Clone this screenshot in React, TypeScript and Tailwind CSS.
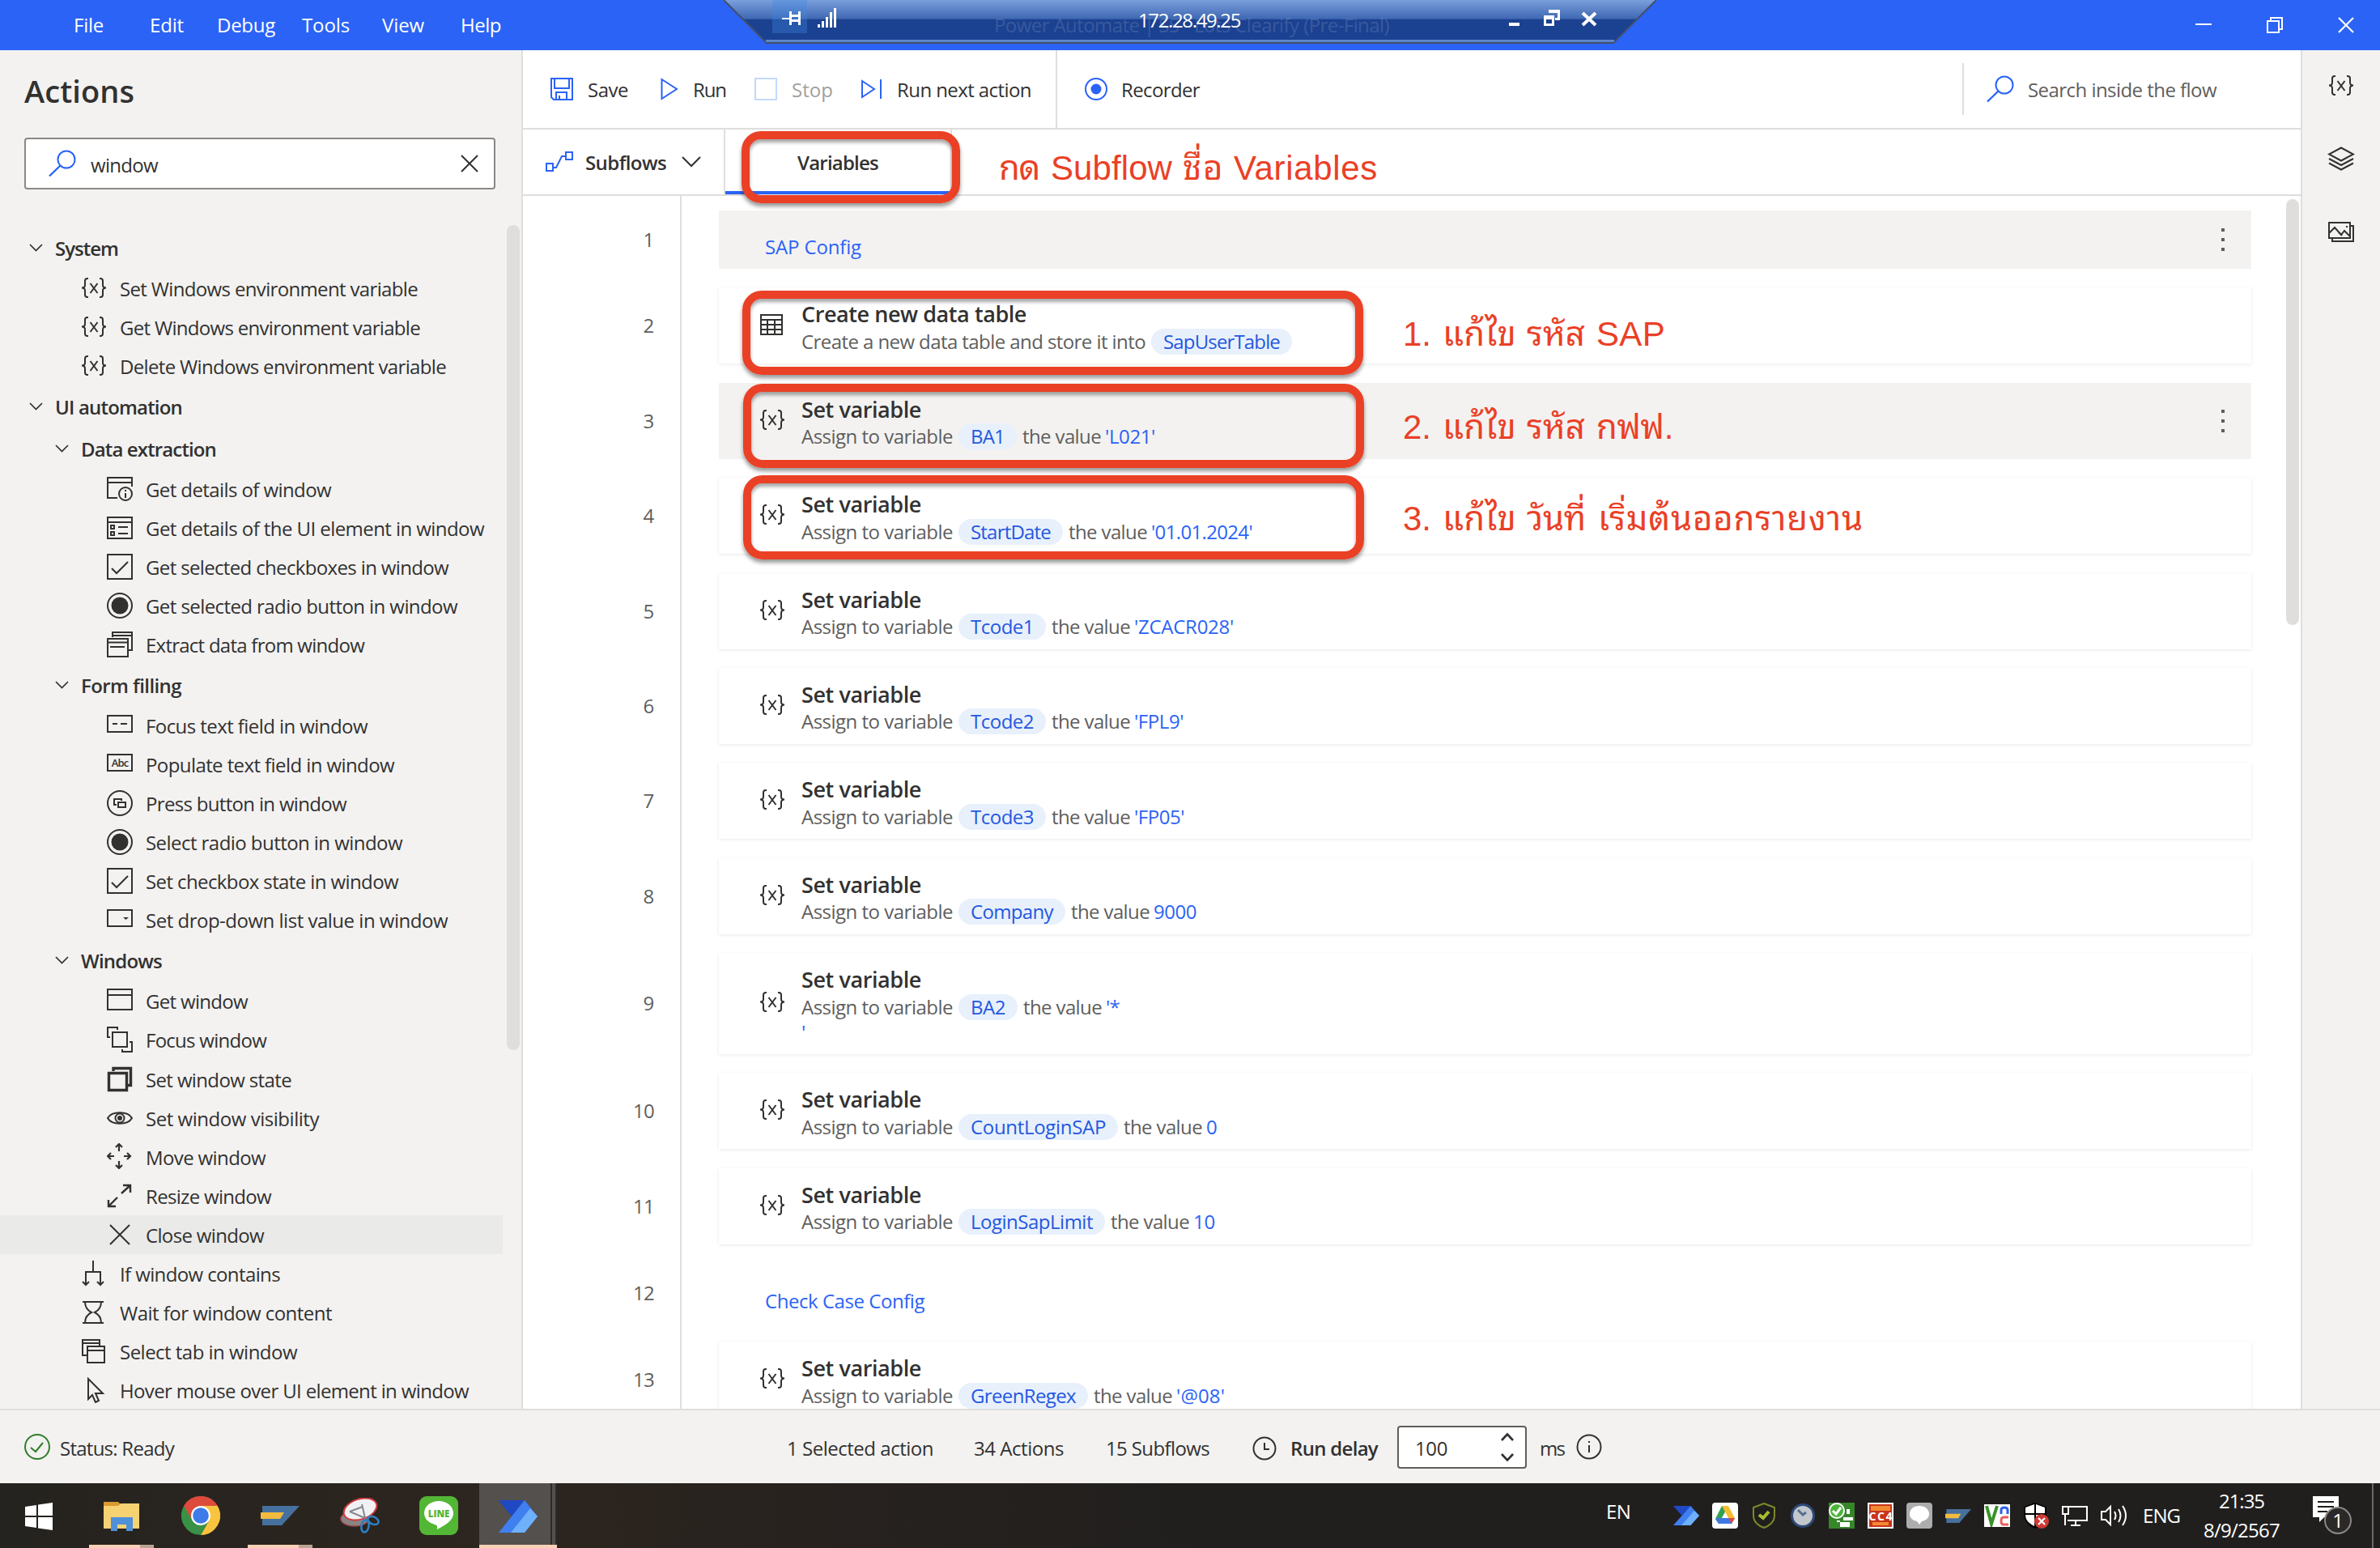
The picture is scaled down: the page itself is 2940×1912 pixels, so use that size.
import React, { useLayoutEffect, useRef, useState } from "react";

/* Text run whose letter spacing is adjusted so that it fills a given width. */
function T({ w, children, className = "" }: { w?: number; children: string; className?: string }) {
  const ref = useRef<HTMLSpanElement>(null);
  const [ls, setLs] = useState<number | null>(null);
  useLayoutEffect(() => {
    if (w && ref.current && ls === null) {
      const natural = ref.current.getBoundingClientRect().width;
      /* Thai vowel and tone marks take no spacing of their own. */
      const clusters = children.replace(/[\u0e31\u0e34-\u0e3a\u0e47-\u0e4e]/g, "").length;
      setLs((w - natural) / clusters);
    }
  }, [w, ls, children]);
  return (
    <span
      ref={ref}
      className={"inline-block whitespace-pre " + className}
      style={ls !== null ? { letterSpacing: `${ls}px` } : undefined}
    >
      {children}
    </span>
  );
}

function Svg({
  w,
  h,
  vb,
  className = "",
  sw = 2,
  children,
}: {
  w: number;
  h: number;
  vb?: string;
  className?: string;
  sw?: number;
  children: React.ReactNode;
}) {
  return (
    <svg
      width={w}
      height={h}
      viewBox={vb ?? `0 0 ${w} ${h}`}
      fill="none"
      stroke="currentColor"
      strokeWidth={sw}
      className={"block shrink-0 " + className}
    >
      {children}
    </svg>
  );
}

const VarIcon = () => (
  <Svg w={32} h={26}>
    <path d="M9 1H8Q5 1 5 4V9Q5 12.5 1 12.5Q5 12.5 5 16V21Q5 24 8 24H9M23 1H24Q27 1 27 4V9Q27 12.5 31 12.5Q27 12.5 27 16V21Q27 24 24 24H23" />
    <path d="M11.5 7L20.5 19M20.5 7L11.5 19" />
  </Svg>
);

const Search = () => (
  <Svg w={34} h={34}>
    <circle cx="22" cy="12" r="10.5" />
    <path d="M14.5 19.5L1 32.5" strokeWidth="2.4" />
  </Svg>
);

const Chevron = ({ big = false }: { big?: boolean }) =>
  big ? (
    <Svg w={24} h={14}>
      <path d="M1 1L12 12L23 1" />
    </Svg>
  ) : (
    <Svg w={17} h={10} sw={1.7}>
      <path d="M1 1L8.5 8.5L16 1" />
    </Svg>
  );

const treeIcons: Record<string, React.ReactNode> = {
  var: <VarIcon />,
  info: (
    <Svg w={32} h={32}>
      <path d="M13 27H1V2H31V13M1 8H31" />
      <circle cx="23" cy="22" r="8" />
      <path d="M23 21V27M23 17V19" />
    </Svg>
  ),
  list: (
    <Svg w={32} h={32}>
      <path d="M1 3H31V29H1ZM1 9H31M14 15H26M14 23H26M5 13H9V17H5ZM5 21H9V25H5Z" />
    </Svg>
  ),
  check: (
    <Svg w={32} h={32}>
      <path d="M1 1H31V31H1Z" />
      <path d="M6 18L12 24L26 10" />
    </Svg>
  ),
  radio: (
    <Svg w={32} h={32}>
      <circle cx="16" cy="16" r="15" />
      <circle cx="16" cy="16" r="10.5" fill="currentColor" stroke="none" />
    </Svg>
  ),
  extract: (
    <Svg w={32} h={32}>
      <path d="M1 9H26V31H1ZM1 13.5H26M4 19H22M7 7V1H31V23H27M7 5H31" />
    </Svg>
  ),
  field: (
    <Svg w={32} h={24} className="-mt-[4px]">
      <path d="M1 2H31V22H1ZM7 12H13M17 12H25" />
    </Svg>
  ),
  abc: (
    <span className="-mt-[4px] flex h-[22px] w-[32px] items-center justify-center border-2 border-[#323130] text-[13px] font-semibold leading-none tracking-[-0.8px]">
      Abc
    </span>
  ),
  press: (
    <Svg w={32} h={32}>
      <circle cx="16" cy="16" r="15" />
      <path d="M12 18H9V11H18V13M14 15H23V21H14Z" />
    </Svg>
  ),
  drop: (
    <Svg w={32} h={24} className="-mt-[4px]">
      <path d="M1 2H31V22H1Z" />
      <path d="M20 11H27L23.5 14Z" fill="currentColor" stroke="none" />
    </Svg>
  ),
  window: (
    <Svg w={32} h={28} className="-mt-[2px]">
      <path d="M1 1H31V26H1ZM1 8H31" />
    </Svg>
  ),
  focus: (
    <Svg w={32} h={32}>
      <path d="M7 7H25V25H7ZM4 13H1V1H13V4M28 19H31V31H19V28" />
    </Svg>
  ),
  state: (
    <Svg w={32} h={32}>
      <path d="M2.5 8.5H24.5V29.5H2.5Z" strokeWidth="3.4" />
      <path d="M8 6V2.5H29.5V23.5H26" strokeWidth="3.4" />
    </Svg>
  ),
  eye: (
    <Svg w={32} h={20}>
      <path d="M1 10C6 1 26 1 31 10C26 19 6 19 1 10Z" />
      <circle cx="16" cy="10" r="5.5" />
      <circle cx="16" cy="10" r="2" fill="currentColor" />
    </Svg>
  ),
  move: (
    <Svg w={32} h={32} sw={2.2} className="-mt-[2px]">
      <path d="M15 1V10M11 5L15 1L19 5M15 31V22M11 27L15 31L19 27M1 16H9M5 12L1 16L5 20M29 16H21M25 12L29 16L25 20" />
    </Svg>
  ),
  resize: (
    <Svg w={32} h={32} sw={2.4}>
      <path d="M20 3H29V12M29 3L18 13M2 21V29H11M3 28L13 18" />
    </Svg>
  ),
  close: (
    <Svg w={32} h={28}>
      <path d="M4 2L28 26M28 2L4 26" />
    </Svg>
  ),
  branch: (
    <Svg w={32} h={34}>
      <path d="M15 1V15M6 31V15H24V31M2 27L6 31L10 27M20 27L24 31L28 27" />
    </Svg>
  ),
  hourglass: (
    <Svg w={32} h={30}>
      <path d="M2 2H28M2 28H28M5 2C5 10 9 13 13 15C9 17 5 20 5 28M25 2C25 10 21 13 17 15C21 17 25 20 25 28" />
    </Svg>
  ),
  tabs: (
    <Svg w={32} h={30}>
      <path d="M8 20H2V1H23V8M2 5H23M8 9H29V29H8ZM8 14H29" />
    </Svg>
  ),
  cursor: (
    <Svg w={32} h={32}>
      <path d="M9 2V27L14 22L18 31L22 29L18 20H27Z" />
    </Svg>
  ),
};

type TreeRow = { kind: "head0" | "head1" | "item1" | "item2"; text: string; w: number; icon?: string; sel?: boolean };
const tree: TreeRow[] = [
  { kind: "head0", text: "System", w: 78 },
  { kind: "item1", text: "Set Windows environment variable", w: 368, icon: "var" },
  { kind: "item1", text: "Get Windows environment variable", w: 371, icon: "var" },
  { kind: "item1", text: "Delete Windows environment variable", w: 403, icon: "var" },
  { kind: "head0", text: "UI automation", w: 157 },
  { kind: "head1", text: "Data extraction", w: 167 },
  { kind: "item2", text: "Get details of window", w: 229, icon: "info" },
  { kind: "item2", text: "Get details of the UI element in window", w: 418, icon: "list" },
  { kind: "item2", text: "Get selected checkboxes in window", w: 374, icon: "check" },
  { kind: "item2", text: "Get selected radio button in window", w: 385, icon: "radio" },
  { kind: "item2", text: "Extract data from window", w: 270, icon: "extract" },
  { kind: "head1", text: "Form filling", w: 124 },
  { kind: "item2", text: "Focus text field in window", w: 274, icon: "field" },
  { kind: "item2", text: "Populate text field in window", w: 307, icon: "abc" },
  { kind: "item2", text: "Press button in window", w: 248, icon: "press" },
  { kind: "item2", text: "Select radio button in window", w: 317, icon: "radio" },
  { kind: "item2", text: "Set checkbox state in window", w: 312, icon: "check" },
  { kind: "item2", text: "Set drop-down list value in window", w: 373, icon: "drop" },
  { kind: "head1", text: "Windows", w: 100 },
  { kind: "item2", text: "Get window", w: 126, icon: "window" },
  { kind: "item2", text: "Focus window", w: 149, icon: "focus" },
  { kind: "item2", text: "Set window state", w: 180, icon: "state" },
  { kind: "item2", text: "Set window visibility", w: 214, icon: "eye" },
  { kind: "item2", text: "Move window", w: 148, icon: "move" },
  { kind: "item2", text: "Resize window", w: 155, icon: "resize" },
  { kind: "item2", text: "Close window", w: 146, icon: "close", sel: true },
  { kind: "item1", text: "If window contains", w: 198, icon: "branch" },
  { kind: "item1", text: "Wait for window content", w: 262, icon: "hourglass" },
  { kind: "item1", text: "Select tab in window", w: 219, icon: "tabs" },
  { kind: "item1", text: "Hover mouse over UI element in window", w: 431, icon: "cursor" },
];

function TreeLine({ r }: { r: TreeRow }) {
  if (r.kind === "head0" || r.kind === "head1") {
    return (
      <div className={"flex h-[52px] items-center gap-[15px] font-semibold " + (r.kind === "head0" ? "pl-[36px]" : "pl-[68px]")}>
        <Chevron />
        <T w={r.w} className="relative top-px">{r.text}</T>
      </div>
    );
  }
  return (
    <div
      className={
        "flex h-[48.04px] w-[621px] items-center gap-4 " +
        (r.kind === "item1" ? "pl-[100px] " : "pl-[132px] ") +
        (r.sel ? "bg-[#eaeae9]" : "")
      }
    >
      <span className="flex w-[32px] justify-center">{treeIcons[r.icon!]}</span>
      <T w={r.w} className="relative top-px">{r.text}</T>
    </div>
  );
}

function Sidebar() {
  return (
    <aside className="flex w-[646px] shrink-0 flex-col overflow-hidden border-r-2 border-[#dfdedd] bg-[#f3f2f1]">
      <h1 className="mt-[26px] pl-[30px] text-[38px] font-semibold leading-[48px]">
        <T w={136}>Actions</T>
      </h1>
      <div className="ml-[30px] mt-[34px] flex h-[64px] w-[582px] items-center rounded-[4px] border-2 border-[#8a8886] bg-white pl-[28px] pr-[19px]">
        <span className="text-[#2b63f6]"><Search /></span>
        <T w={83} className="relative top-[2px] ml-[18px]">window</T>
        <span className="ml-auto">
          <Svg w={22} h={22}><path d="M1 1L21 21M21 1L1 21" /></Svg>
        </span>
      </div>
      <div className="mt-[44px] flex min-h-0 flex-1 justify-between overflow-hidden">
        <div className="mt-[2px]">
          {tree.map((r, i) => (
            <TreeLine key={i} r={r} />
          ))}
        </div>
        <div className="mr-[2px] h-[1019px] w-[16px] shrink-0 rounded-full bg-[#dfdedd]" />
      </div>
    </aside>
  );
}

type Step = {
  h: number;
  n: number;
  comment?: string;
  cw?: number;
  hl?: boolean;
  title?: string;
  v?: string;
  vw?: number;
  val?: string;
  valw?: number;
  extra?: string;
};
const steps: Step[] = [
  { n: 1, h: 72, comment: "SAP Config", cw: 119, hl: true },
  { n: 2, h: 94, title: "Create new data table", v: "SapUserTable", vw: 144 },
  { n: 3, h: 94, hl: true, v: "BA1", vw: 42, val: "'L021'", valw: 62 },
  { n: 4, h: 94, v: "StartDate", vw: 99, val: "'01.01.2024'", valw: 125 },
  { n: 5, h: 94, v: "Tcode1", vw: 78, val: "'ZCACR028'", valw: 123 },
  { n: 6, h: 94, v: "Tcode2", vw: 78, val: "'FPL9'", valw: 61 },
  { n: 7, h: 94, v: "Tcode3", vw: 78, val: "'FP05'", valw: 62 },
  { n: 8, h: 94, v: "Company", vw: 102, val: "9000", valw: 53 },
  { n: 9, h: 124.6, v: "BA2", vw: 43, val: "'*", valw: 17, extra: "'" },
  { n: 10, h: 94, v: "CountLoginSAP", vw: 167, val: "0", valw: 13 },
  { n: 11, h: 94, v: "LoginSapLimit", vw: 151, val: "10", valw: 27 },
  { n: 12, h: 74, comment: "Check Case Config", cw: 197 },
  { n: 13, h: 94, v: "GreenRegex", vw: 130, val: "'@08'", valw: 60 },
];

function StepCard({ s }: { s: Step }) {
  return (
    <div
      style={{ height: s.h }}
      className={
        "flex w-[1893px] shrink-0 " +
        (s.hl ? "bg-[#f3f2f1]" : s.comment ? "bg-white" : "bg-white shadow-[0_1px_4px_rgba(0,0,0,0.09)]")
      }
    >
      {s.comment ? (
        <div className={"pl-[57px] leading-[36px] text-[#2b63f6] " + (s.n === 1 ? "pt-[27px]" : "pt-[29px]")}>
          <T w={s.cw}>{s.comment}</T>
        </div>
      ) : (
        <>
          <div className="flex w-[102px] items-center pb-[2px] pl-[50px]">
            {s.n === 2 ? (
              <Svg w={30} h={26}>
                <path d="M2 1H28V25H2ZM2 7H28M2 13H28M2 19H28M10 7V25M19 7V25" />
              </Svg>
            ) : (
              <VarIcon />
            )}
          </div>
          <div className="pt-[16px]">
            <div className="text-[27px] font-semibold leading-[33px]">
              <T w={s.title ? 278 : 148}>{s.title ?? "Set variable"}</T>
            </div>
            <div className="flex h-[35px] items-center gap-2 leading-[32px] text-[#605e5c]">
              <T w={s.title ? 425 : 187}>
                {s.title ? "Create a new data table and store it into" : "Assign to variable"}
              </T>
              <span className="-mx-px flex h-[32px] items-center rounded-full bg-[#e8f0fc] px-[15px] text-[#2458e0]">
                <T w={s.vw}>{s.v!}</T>
              </span>
              {s.val && (
                <>
                  <T w={97}>the value</T>
                  <T w={s.valw} className="-ml-[3px] text-[#2b63f6]">{s.val}</T>
                </>
              )}
            </div>
            {s.extra && <div className="leading-[28px] text-[#2b63f6]">{s.extra}</div>}
          </div>
        </>
      )}
      {s.hl && (
        <div className="ml-auto mr-[33px] flex flex-col justify-center gap-[8px]">
          <span className="h-[4px] w-[4px] bg-[#605e5c]" />
          <span className="h-[4px] w-[4px] bg-[#605e5c]" />
          <span className="h-[4px] w-[4px] bg-[#605e5c]" />
        </div>
      )}
    </div>
  );
}

function Toolbar() {
  return (
    <div className="flex h-[98px] shrink-0 items-center border-b-2 border-[#dfdedd]">
      <span className="ml-[34px] text-[#2b63f6]">
        <Svg w={28} h={28}>
          <path d="M1 1H27V27H4L1 24ZM5 1V13H23V1M7 27V18H20V27M11 27V22" />
        </Svg>
      </span>
      <T w={50} className="relative top-px ml-[18px]">Save</T>
      <span className="ml-[40px] text-[#2b63f6]">
        <Svg w={22} h={28}><path d="M1.5 2V26L20 14Z" /></Svg>
      </span>
      <T w={41} className="relative top-px ml-[18px]">Run</T>
      <span className="ml-[35px] h-[28px] w-[28px] border-2 border-[#c3d9fb]" />
      <T w={51} className="relative top-px ml-[18px] text-[#a19f9d]">Stop</T>
      <span className="ml-[35px] text-[#2b63f6]">
        <Svg w={26} h={26}><path d="M1 3V23L16 13ZM24 1V25" /></Svg>
      </span>
      <T w={166} className="relative top-px ml-[18px]">Run next action</T>
      <span className="ml-[30px] h-full w-[2px] bg-[#dfdedd]" />
      <span className="ml-[34px] text-[#2b63f6]">
        <Svg w={28} h={28}>
          <circle cx="14" cy="14" r="13" />
          <circle cx="14" cy="14" r="6.5" fill="currentColor" stroke="none" />
        </Svg>
      </span>
      <T w={97} className="relative top-px ml-[17px]">Recorder</T>
      <span className="ml-auto h-[64px] w-[2px] bg-[#dfdedd]" />
      <span className="ml-[28px] text-[#2b63f6]"><Search /></span>
      <T w={233} className="relative top-px ml-[17px] mr-[104px] text-[#605e5c]">Search inside the flow</T>
    </div>
  );
}

function TabBar() {
  return (
    <div className="flex h-[82px] shrink-0 items-stretch border-b-2 border-[#dfdedd] font-semibold">
      <div className="flex w-[250px] items-center border-r-2 border-[#dfdedd] pl-[28px]">
        <span className="text-[#2b63f6]">
          <Svg w={34} h={26}>
            <path d="M1 15H9V24H1ZM25 1H33V10H25ZM9 20H13L20 6H25" />
          </Svg>
        </span>
        <T w={100} className="relative top-px ml-[15px]">Subflows</T>
        <span className="ml-[19px]"><Chevron big /></span>
      </div>
      <div className="flex w-[280px] items-center border-b-4 border-r-2 border-b-[#2b63f6] border-r-[#dfdedd] pl-[89px] pt-[4px]">
        <T w={100} className="relative top-px">Variables</T>
      </div>
    </div>
  );
}

/* Hand-made markup placed over the flow. */
function Frame({ className }: { className: string }) {
  return (
    <div
      className={
        "absolute rounded-[24px] border-[10px] border-[#ea4026] shadow-[0_4px_5px_rgba(0,0,0,0.4),inset_0_4px_4px_rgba(0,0,0,0.35)] " +
        className
      }
    />
  );
}

function Note({ className, parts }: { className: string; parts: [string, number, number][] }) {
  return (
    <div className={"absolute flex whitespace-pre font-['Liberation_Sans','Noto_Sans_Thai_Looped','Noto_Looped_Thai','Loma','Waree','Garuda','Umpush',sans-serif] text-[42px] leading-[60px] text-[#ea4026] " + className}>
      {parts.map(([t, w, g], i) => (
        <span key={i} style={{ marginRight: g }}>
          <T w={w}>{t}</T>
        </span>
      ))}
    </div>
  );
}

function Markup() {
  return (
    <>
      <Frame className="left-[916px] top-[162px] h-[89px] w-[270px]" />
      <Frame className="left-[917px] top-[359px] h-[104px] w-[767px]" />
      <Frame className="left-[918px] top-[474px] h-[104px] w-[767px]" />
      <Frame className="left-[918px] top-[587px] h-[104px] w-[767px]" />
      <Note className="left-[1234px] top-[178px]" parts={[["กด", 50, 14], ["Subflow", 150, 13], ["ชื่อ", 51, 12], ["Variables", 178, 0]]} />
      <Note className="left-[1733px] top-[383px]" parts={[["1.", 35, 14], ["แก้ไข", 91, 13], ["รหัส", 72, 14], ["SAP", 85, 0]]} />
      <Note className="left-[1733px] top-[498px]" parts={[["2.", 35, 14], ["แก้ไข", 91, 13], ["รหัส", 72, 14], ["กฟฟ.", 95, 0]]} />
      <Note className="left-[1733px] top-[611px]" parts={[["3.", 35, 14], ["แก้ไข", 91, 13], ["วันที่", 73, 15], ["เริ่มต้นออกรายงาน", 328, 0]]} />
    </>
  );
}

function RemoteBar() {
  return (
    <div className="absolute left-[894px] top-0 h-[54px] w-[1152px]">
      <svg width="1152" height="54" viewBox="0 0 1152 54" className="absolute inset-0">
        <defs>
          <linearGradient id="rb" x1="0" y1="0" x2="0" y2="1">
            <stop offset="0" stopColor="#7a9fdc" />
            <stop offset="0.44" stopColor="#3f68b3" />
            <stop offset="0.45" stopColor="#1b4190" />
            <stop offset="1" stopColor="#1b4293" />
          </linearGradient>
        </defs>
        <path d="M0 0H1152L1099 53H53Z" fill="url(#rb)" />
        <path d="M0 0L53 53H1099L1152 0" fill="none" stroke="#43506a" strokeWidth="2" />
        <path d="M52 50.5H1100" stroke="#6a92d6" strokeWidth="2.4" />
        <rect x="60" y="0" width="43" height="41" fill="#3f86e0" opacity="0.35" />
        <g fill="#fff">
          <path d="M72 22H81V14H84V18H92V14H95V31H92V27H84V31H81V24H72ZM84 21V24H92V21Z" fillRule="evenodd" />
          <path d="M116 30H119V34H116ZM121 26H124V34H121ZM126 21H129V34H126ZM131 15H134V34H131ZM136 10H139V34H136Z" />
          <path d="M970 28H983V32H970Z" />
          <path d="M1019 12H1033V25H1027V22H1030V16H1019ZM1013 19H1026V32H1013ZM1016 24V29H1023V24Z" fillRule="evenodd" />
        </g>
        <path d="M1061 16L1077 31M1077 16L1061 31" stroke="#fff" strokeWidth="4" />
      </svg>
      <div className="absolute left-[334px] top-[14px] leading-[34px] text-white/15">
        <T w={488}>Power Automate | SS - Lots Clearify (Pre-Final)</T>
      </div>
      <div className="absolute left-[512px] top-[8px] leading-[34px] text-white">
        <T w={126}>172.28.49.25</T>
      </div>
    </div>
  );
}

function TitleBar() {
  const menu: [string, number, number][] = [
    ["File", 37, 91],
    ["Edit", 42, 57],
    ["Debug", 72, 41],
    ["Tools", 59, 33],
    ["View", 52, 40],
    ["Help", 50, 45],
  ];
  return (
    <header className="flex h-[62px] shrink-0 items-center bg-[#2b63f6] text-white">
      {menu.map(([t, w, m]) => (
        <span key={t} style={{ marginLeft: m }}>
          <T w={w}>{t}</T>
        </span>
      ))}
      <div className="ml-auto mr-[32px] flex items-center gap-[68px]">
        <Svg w={20} h={20}><path d="M0 9H20" /></Svg>
        <Svg w={20} h={20}><path d="M1 5H15V19H1ZM5 5V1H19V15H15" /></Svg>
        <Svg w={20} h={20} sw={2.2}><path d="M1 1L19 19M19 1L1 19" /></Svg>
      </div>
    </header>
  );
}

function StatusBar() {
  return (
    <footer className="flex h-[92px] shrink-0 items-center border-t-2 border-[#dfdedc] bg-[#f3f2f1]">
      <span className="ml-[30px] text-[#2d7d27]">
        <Svg w={32} h={32}>
          <circle cx="16" cy="16" r="15" />
          <path d="M8 17L14 22L23 11" />
        </Svg>
      </span>
      <T w={141} className="relative top-[2px] ml-[12px]">Status: Ready</T>
      <T w={181} className="relative top-[2px] ml-[757px]">1 Selected action</T>
      <T w={111} className="relative top-[2px] ml-[50px]">34 Actions</T>
      <T w={128} className="relative top-[2px] ml-[52px]">15 Subflows</T>
      <span className="relative top-[2px] ml-[53px]">
        <Svg w={30} h={30}>
          <circle cx="15" cy="15" r="13.5" />
          <path d="M15 8V16H21" />
        </Svg>
      </span>
      <T w={108} className="relative top-[2px] ml-[17px] font-semibold">Run delay</T>
      <div className="ml-[24px] flex h-[53px] w-[160px] items-center justify-between rounded-[4px] border-2 border-[#605e5c] bg-white pl-[20px] pr-[12px]">
        <T w={40} className="relative top-[2px]">100</T>
        <Svg w={20} h={36} sw={2.6}>
          <path d="M3 10L10 2.5L17 10M3 27L10 34.5L17 27" />
        </Svg>
      </div>
      <T w={30} className="relative top-[2px] ml-[16px]">ms</T>
      <span className="ml-[15px]">
        <Svg w={32} h={32}>
          <circle cx="16" cy="16" r="14.5" />
          <path d="M16 14V23M16 9V11" />
        </Svg>
      </span>
    </footer>
  );
}

const FlowLogo = ({ w, h }: { w: number; h: number }) => (
  <svg width={w} height={h} viewBox="0 0 48 40" preserveAspectRatio="none" className="block shrink-0">
    <path d="M0 0H32L16 20Z" fill="#1f49c4" />
    <path d="M32 0L48 20L32 40H0Z" fill="#3f7ff0" />
    <path d="M39 10L48 20L32 40H15Z" fill="#6fb0fb" />
  </svg>
);
const PeaLogo = ({ w, h }: { w: number; h: number }) => (
  <svg width={w} height={h} viewBox="0 0 48 24" preserveAspectRatio="none" className="block shrink-0">
    <path d="M2 0H48L26 24H2Z" fill="#46719f" />
    <path d="M0 8H29L24 16H0Z" fill="#f2bb3f" />
  </svg>
);

function Taskbar() {
  return (
    <nav className="flex h-[80px] shrink-0 items-stretch overflow-hidden bg-linear-to-r from-[#25231f] via-[#2d251f] via-20% to-[#211f1e] to-50% text-white">
      <div className="flex w-[110px] items-center pl-[31px] pt-[1px]">
        <svg width="34" height="34" viewBox="0 0 34 34" fill="#fff">
          <path d="M0 5L14 3V16H0ZM16 2.6L34 0V16H16ZM0 18H14V31L0 29ZM16 18H34V34L16 31.4Z" />
        </svg>
      </div>
      <div className="flex w-[80px] flex-col justify-between">
        <div className="pl-[18px] pt-[22px]">
          <svg width="44" height="38" viewBox="0 0 44 38">
            <path d="M0 1H18L21 4V10H0Z" fill="#d99a30" />
            <path d="M0 6H18L21 3H44V34H0Z" fill="#f7d272" />
            <path d="M9 20H36V37H28V29H17V37H9Z" fill="#4e91d8" />
          </svg>
        </div>
        <div className="flex h-[4px] bg-[#fbd0b6]"><span className="ml-auto w-[17px] bg-[#bba492]" /></div>
      </div>
      <div className="flex w-[116px] items-center pl-[34px]">
        <svg width="48" height="48" viewBox="0 0 48 48">
          <path d="M24 24L3.2 12A24 24 0 0 1 44.8 12Z" fill="#dd4b3d" />
          <path d="M24 24L3.2 12A24 24 0 0 0 24 48L34.4 30Z" fill="#389144" />
          <path d="M24 12H44.8A24 24 0 0 1 24 48L34.4 30Z" fill="#f8c440" />
          <path d="M24 0A24 24 0 0 0 3.2 12L13.6 30L24 12Z" fill="#dd4b3d" />
          <circle cx="24" cy="24" r="12" fill="#fff" />
          <circle cx="24" cy="24" r="9.8" fill="#3f7be8" />
        </svg>
      </div>
      <div className="flex w-[80px] flex-col justify-between">
        <div className="pl-[16px] pt-[28px]"><PeaLogo w={48} h={24} /></div>
        <div className="flex h-[4px] bg-[#fbd0b6]"><span className="ml-auto w-[17px] bg-[#bba492]" /></div>
      </div>
      <div className="flex w-[132px] items-center pl-[34px]">
        <svg width="50" height="44" viewBox="0 0 50 44">
          <ellipse cx="18" cy="26" rx="17" ry="9" fill="#8b8383" stroke="#9c4a4c" strokeWidth="1.5" />
          <ellipse cx="25" cy="14" rx="21" ry="12.5" transform="rotate(-18 25 14)" fill="#f1f1f3" stroke="#cf3a40" strokeWidth="2" />
          <path d="M12 17L31 25M27 8L31 25M12 17L28 11" stroke="#85888f" strokeWidth="2" fill="none" />
          <ellipse cx="41" cy="28" rx="7" ry="4.5" transform="rotate(25 41 28)" fill="none" stroke="#2d7fc4" strokeWidth="2.6" />
          <ellipse cx="31" cy="35" rx="4.5" ry="7.5" transform="rotate(10 31 35)" fill="none" stroke="#2d7fc4" strokeWidth="2.6" />
        </svg>
      </div>
      <div className="flex w-[74px] items-center">
        <span className="flex h-[48px] w-[48px] items-center justify-center rounded-[9px] bg-[#53b635]">
          <svg width="38" height="38" viewBox="0 0 38 38">
            <path d="M19 1C9 1 1 7.5 1 16C1 23 7 28 14 30C18 31 17 33 17 36C22 33 37 27 37 16C37 7.5 29 1 19 1Z" fill="#fff" />
            <text x="19" y="20.5" textAnchor="middle" fontSize="11.5" fontWeight="800" fill="#53b635" fontFamily="Open Sans, sans-serif">LINE</text>
          </svg>
        </span>
      </div>
      <div className="flex w-[96px] flex-col justify-between bg-[#54504d]">
        <div className="flex flex-1 items-center justify-between">
          <span className="ml-[24px] mt-[5px]"><FlowLogo w={48} h={40} /></span>
          <span className="h-full w-[8px] border-x-2 border-[#2f2b29]" />
        </div>
        <div className="h-[4px] bg-[#fbd0b6]" />
      </div>

      <div className="ml-auto flex items-center">
        <T w={30} className="-mt-[10px] mr-[53px]">EN</T>
        <div className="flex items-center gap-[16px]">
          <FlowLogo w={32} h={24} />
          <svg width="32" height="32" viewBox="0 0 32 32">
            <rect width="32" height="32" rx="4" fill="#fff" />
            <path d="M12 4H20L12 19L8 26L4 20Z" fill="#34a04f" />
            <path d="M12 4H20L28 19H20Z" fill="#f6bd33" />
            <path d="M8 19H28L24 26H8L4 20Z" fill="#3f78e4" />
            <path d="M20 19H28L24 26Z" fill="#dd4b3d" />
            <path d="M16 12L20 19H12Z" fill="#fff" />
          </svg>
          <svg width="32" height="32" viewBox="0 0 32 32" fill="none">
            <path d="M16 1L29 6V16C29 24 22 29 16 31C10 29 3 24 3 16V6Z" stroke="#7a8a28" strokeWidth="2" />
            <path d="M10 15L15 19L22 11" stroke="#a8bf2f" strokeWidth="4" />
          </svg>
          <svg width="32" height="32" viewBox="0 0 32 32">
            <circle cx="16" cy="16" r="15" fill="#2c4a78" />
            <circle cx="16" cy="16" r="12" fill="#c3c6cc" />
            <path d="M10 9L16 15L20 12" stroke="#54708f" strokeWidth="3" fill="none" />
          </svg>
          <svg width="32" height="32" viewBox="0 0 32 32">
            <rect width="32" height="32" fill="#37862a" />
            <circle cx="10" cy="10" r="9" fill="#4db53c" stroke="#fff" strokeWidth="2" />
            <path d="M5 10L9 14L15 6" stroke="#fff" strokeWidth="3" fill="none" />
            <path d="M22 8H26V14H22ZM18 18H30V22H18ZM14 24H26V30H14ZM10 22H14V24H10Z" fill="#fff" />
          </svg>
          <svg width="32" height="32" viewBox="0 0 32 32">
            <rect width="32" height="32" fill="#fff" />
            <rect x="2" y="2" width="28" height="28" fill="#c8341a" />
            <path d="M4 4H28V10H4ZM6 24H26V28H6Z" fill="#f28a32" />
            <text x="16" y="22" textAnchor="middle" fontSize="14" fontWeight="700" fill="#fff" textLength="29" fontFamily="Open Sans, sans-serif">CC4</text>
          </svg>
          <svg width="32" height="32" viewBox="0 0 32 32">
            <rect width="32" height="32" rx="4" fill="#adadad" />
            <path d="M16 4C9 4 4 8 4 14C4 19 8 22 13 23L16 27L19 23C24 22 28 19 28 14C28 8 23 4 16 4Z" fill="#fff" />
          </svg>
          <PeaLogo w={32} h={17} />
          <svg width="32" height="28" viewBox="0 0 32 28">
            <rect width="32" height="28" fill="#fff" />
            <path d="M3 2L9 24L16 2" stroke="#3a9128" strokeWidth="4" fill="none" />
            <path d="M21 12V7Q21 4 25 4Q29 4 29 7V12" stroke="#2f62ea" strokeWidth="3" fill="none" />
            <path d="M30 16H24Q21 16 21 20.500Q21 25 24 25H30" stroke="#e8605c" strokeWidth="3" fill="none" />
          </svg>
          <svg width="32" height="32" viewBox="0 0 32 32">
            <path d="M14 0L29 5V14C29 23 22 29 15 32C7 29 1 22 1 14V5Z" fill="#000" />
            <path d="M14 2L3 6V13H14ZM16 2L27 6V13H16ZM3 15H14V29C8 26 3 22 3 15ZM16 15H26L16 29Z" fill="#fff" />
            <circle cx="23" cy="23" r="9" fill="#cf3a34" />
            <path d="M19 19L27 27M27 19L19 27" stroke="#fff" strokeWidth="2.2" />
          </svg>
          <svg width="32" height="28" viewBox="0 0 32 28" fill="none" stroke="#fff" strokeWidth="2">
            <path d="M9 3H31V20H7M1 3H8V12H1ZM4 12V26M17 20V26M11 26H23" />
          </svg>
          <svg width="34" height="28" viewBox="0 0 34 28" fill="none" stroke="#fff" strokeWidth="2">
            <path d="M1 9H6L12 3V25L6 19H1ZM17 9Q20 14 17 19M22 6Q27 14 22 22M27 2Q35 14 27 26" />
          </svg>
        </div>
        <T w={46} className="ml-[18px]">ENG</T>
        <div className="ml-[29px] mr-[41px] flex flex-col items-center pb-px text-center leading-[36px]">
          <T w={56}>21:35</T>
          <T w={94}>8/9/2567</T>
        </div>
        <div className="relative h-[48px] w-[50px]">
          <svg width="34" height="32" viewBox="0 0 34 32">
            <path d="M0 0H32V26H14L8 32V26H0Z" fill="#fff" />
            <path d="M6 7H26M6 13H26M6 19H18" stroke="#211f1e" strokeWidth="2" />
          </svg>
          <span className="absolute left-[14px] top-[13px] flex h-[34px] w-[34px] items-center justify-center rounded-full border-2 border-[#8a8886] bg-[#2b2928] leading-none">
            1
          </span>
        </div>
        <span className="ml-[23px] mr-[8px] h-[80px] w-[2px] bg-[#6a6866]" />
      </div>
    </nav>
  );
}

export default function App() {
  return (
    <div className="relative flex h-[1912px] w-[2940px] flex-col overflow-hidden bg-white font-['Open_Sans','Noto_Sans',sans-serif] text-[24px] leading-[34px] text-[#323130]">
      <TitleBar />
      <div className="flex min-h-0 flex-1">
        <Sidebar />
        <main className="flex w-[2196px] shrink-0 flex-col">
          <Toolbar />
          <TabBar />
          <div className="flex min-h-0 flex-1 overflow-hidden">
            <div className="flex w-[196px] shrink-0 flex-col gap-[23.4px] overflow-hidden border-r-2 border-[#dfdedd] pr-[32px] pt-[18px] text-right text-[#605e5c]">
              {steps.map((s) => (
                <div key={s.n} style={{ height: s.h }} className="flex shrink-0 items-center justify-end">
                  <T w={s.n > 9 ? 26 : 13.4}>{String(s.n)}</T>
                </div>
              ))}
            </div>
            <div className="flex flex-1 flex-col gap-[23.4px] pl-[46px] pt-[18px]">
              {steps.map((s) => (
                <StepCard key={s.n} s={s} />
              ))}
            </div>
            <div className="mr-[2px] mt-[4px] h-[526px] w-[16px] rounded-full bg-[#dfdedd]" />
          </div>
        </main>
        <aside className="flex flex-1 flex-col items-center border-l-2 border-[#dfdedd] bg-[#f3f2f1] pt-[31px]">
          <VarIcon />
          <Svg w={34} h={30} className="mt-[62px]">
            <path d="M17 1.500L32 9.500L17 17.500L2 9.500ZM2 15L17 23L32 15M2 20.500L17 28.500L32 20.500" />
          </Svg>
          <Svg w={32} h={26} className="mt-[63px]">
            <path d="M1 1H27V20H1ZM27 5H31V24H5V20M1 14L8 7L17 17M13 13L16 16L20 11L27 18M22 6H24" />
          </Svg>
        </aside>
      </div>
      <StatusBar />
      <Taskbar />
      <RemoteBar />
      <Markup />
    </div>
  );
}
